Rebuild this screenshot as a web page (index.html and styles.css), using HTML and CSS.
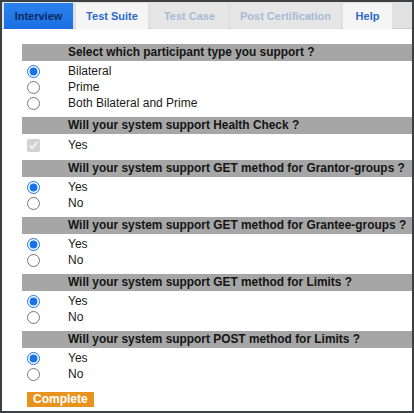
FILE: index.html
```html
<!DOCTYPE html>
<html lang="en">
<head>
<meta charset="utf-8">
<title>Interview</title>
<link rel="stylesheet" href="styles.css">
</head>
<body>
<div class="frame">
  <nav class="tabs">
    <span class="tab tab-active tab-interview">Interview</span>
    <span class="tab tab-light tab-suite">Test Suite</span>
    <span class="tab tab-disabled tab-case">Test Case</span>
    <span class="tab tab-disabled tab-post">Post Certification</span>
    <span class="tab tab-light tab-help">Help</span>
  </nav>
  <form class="form">
    <section class="group">
      <div class="q">Select which participant type you support ?</div>
      <label class="opt"><input type="radio" name="p" checked><span>Bilateral</span></label>
      <label class="opt"><input type="radio" name="p"><span>Prime</span></label>
      <label class="opt"><input type="radio" name="p"><span>Both Bilateral and Prime</span></label>
    </section>
    <section class="group">
      <div class="q">Will your system support Health Check ?</div>
      <label class="opt opt-check"><input type="checkbox" checked disabled><span>Yes</span></label>
    </section>
    <section class="group">
      <div class="q">Will your system support GET method for Grantor-groups ?</div>
      <label class="opt"><input type="radio" name="g1" checked><span>Yes</span></label>
      <label class="opt"><input type="radio" name="g1"><span>No</span></label>
    </section>
    <section class="group">
      <div class="q">Will your system support GET method for Grantee-groups ?</div>
      <label class="opt"><input type="radio" name="g2" checked><span>Yes</span></label>
      <label class="opt"><input type="radio" name="g2"><span>No</span></label>
    </section>
    <section class="group">
      <div class="q">Will your system support GET method for Limits ?</div>
      <label class="opt"><input type="radio" name="g3" checked><span>Yes</span></label>
      <label class="opt"><input type="radio" name="g3"><span>No</span></label>
    </section>
    <section class="group">
      <div class="q">Will your system support POST method for Limits ?</div>
      <label class="opt"><input type="radio" name="g4" checked><span>Yes</span></label>
      <label class="opt"><input type="radio" name="g4"><span>No</span></label>
    </section>
    <button type="button" class="complete">Complete</button>
  </form>
</div>
</body>
</html>
```

FILE: styles.css
```css
html, body {
  margin: 0;
  padding: 0;
  background: #ffffff;
}

.frame {
  box-sizing: border-box;
  width: 414px;
  height: 413px;
  border: 2px solid #3b3f46;
  background: #ffffff;
  overflow: hidden;
  font-family: "Liberation Sans", Arial, sans-serif;
}

.tabs {
  display: flex;
  gap: 3px;
  height: 27px;
  box-sizing: border-box;
  padding: 1px 0 0 2px;
  background: #e1e1e1;
  border-bottom: 1px solid #cdcdcd;
}

.tab {
  height: 26px;
  line-height: 26px;
  text-align: center;
  font-size: 11px;
  font-weight: bold;
  white-space: nowrap;
}

.tab-interview { width: 69px; }
.tab-suite { width: 72px; }
.tab-case { width: 77px; }
.tab-post { width: 109px; }
.tab-help { width: 49px; }

.tab-active {
  background: linear-gradient(#2b82ee, #1a70e2);
  color: #0b2a63;
}

.tab-light {
  background: #f5f5f5;
  color: #2d6acb;
}

.tab-disabled {
  background: #e6e6e6;
  color: #a7bbd6;
}

.form {
  display: flex;
  flex-direction: column;
  gap: 6px;
  margin: 0;
  padding: 15px 0 0 20px;
}

.group {
  display: flex;
  flex-direction: column;
}

.q {
  height: 17px;
  line-height: 17px;
  margin-bottom: 2px;
  padding-left: 46px;
  background: #a6a6a6;
  color: #151515;
  font-size: 11.9px;
  font-weight: bold;
  white-space: nowrap;
}

.opt {
  display: grid;
  grid-template-columns: 46px 1fr;
  align-items: center;
  height: 16px;
  font-size: 12px;
  color: #1a1a1a;
}

.opt-check {
  height: 18px;
}

.opt input {
  width: 13px;
  height: 13px;
  margin: 0 0 0 5px;
  accent-color: #1a73e8;
}

.complete {
  align-self: flex-start;
  margin: 4px 0 0 5px;
  height: 15px;
  padding: 0 6px;
  border: none;
  background: #e9931f;
  color: #ffffff;
  font-family: "Liberation Sans", Arial, sans-serif;
  font-size: 12px;
  font-weight: bold;
  line-height: 15px;
}
```
